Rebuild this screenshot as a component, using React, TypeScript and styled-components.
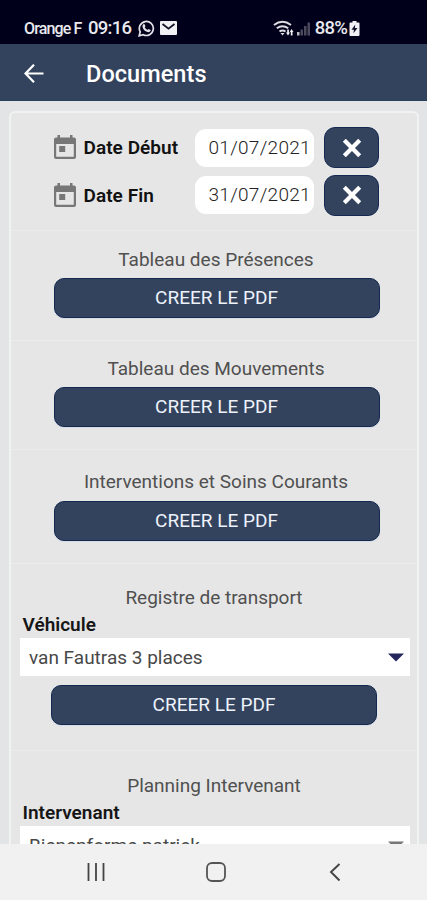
import React from "react";
import styled, { createGlobalStyle } from "styled-components";

const GlobalStyle = createGlobalStyle`
  * { box-sizing: border-box; }
  body { margin: 0; background: #e4e4e5; font-family: Roboto, "Liberation Sans", sans-serif; }
`;

const Screen = styled.div`
  display: flex;
  flex-direction: column;
  width: 427px;
  height: 900px;
  overflow: hidden;
  background: #e3e4e5;
`;

const StatusBar = styled.div`
  display: flex;
  flex: none;
  justify-content: space-between;
  height: 44px;
  padding: 12px 67px 0 24px;
  background: #00001b;
  color: #e9e9ee;
`;

const StatusGroup = styled.div`
  display: flex;
  align-items: center;
  height: 32px;
`;

const StatusText = styled.span<{ $size: number; $gap: number; $tracking: number }>`
  font-size: ${(p) => p.$size}px;
  font-weight: 500;
  letter-spacing: ${(p) => p.$tracking}px;
  margin-right: ${(p) => p.$gap}px;
  white-space: nowrap;
`;

const AppBar = styled.header`
  display: flex;
  flex: none;
  align-items: center;
  height: 57px;
  padding: 3px 0 0 24px;
  background: #33435d;
  border-bottom: 1px solid #24425c;
  color: #fff;
`;

const AppTitle = styled.h1`
  margin: 0 0 0 42px;
  font-size: 23.5px;
  line-height: 28px;
  font-weight: 500;
  letter-spacing: 0.05px;
`;

const Content = styled.main`
  flex: 1;
  min-height: 0;
  padding: 10px 8px 0 9px;
  overflow: hidden;
`;

const Panel = styled.div`
  height: 760px;
  border: 2px solid #f1f2f2;
  border-radius: 6px;
  background: #e6e6e6;
`;

const Section = styled.section<{ $height: number; $top: number }>`
  display: flex;
  flex-direction: column;
  height: ${(p) => p.$height}px;
  padding: ${(p) => p.$top}px 0 0;
  border-bottom: 1px solid #ececec;
`;

const DateRow = styled.div`
  display: flex;
  align-items: center;
  height: 41px;
  margin: 0 0 6.5px 42.5px;
`;

const DateLabel = styled.label`
  width: 111px;
  margin-left: 8px;
  font-size: 19px;
  font-weight: 600;
  letter-spacing: 0.05px;
  color: #111;
`;

const DateInput = styled.div`
  width: 119px;
  height: 38px;
  padding-left: 14px;
  margin-right: 10.5px;
  border-radius: 11px;
  background: #fff;
  color: #222;
  font-size: 19px;
  font-weight: 300;
  line-height: 38px;
  letter-spacing: 0.3px;
  white-space: nowrap;
`;

const ClearButton = styled.button`
  display: flex;
  align-items: center;
  justify-content: center;
  width: 55px;
  height: 41px;
  padding: 0;
  border: 1px solid #142850;
  border-radius: 11px;
  background: #33435d;
`;

const Title = styled.h2<{ $shift: number }>`
  margin: 0;
  padding-left: ${(p) => p.$shift}px;
  font-size: 19px;
  font-weight: 400;
  line-height: 24px;
  text-align: center;
  color: #505050;
`;

const PdfButton = styled.button<{ $left: number; $gap: number }>`
  flex: none;
  width: 326px;
  height: 40px;
  margin: ${(p) => p.$gap}px 0 0 ${(p) => p.$left}px;
  padding: 0;
  border: 1px solid #142850;
  border-radius: 10px;
  background: #33435d;
  box-shadow: 0 1px 1px #d3dbe5;
  color: #edf2fb;
  font: 400 19px/38px Roboto, "Liberation Sans", sans-serif;
`;

const FieldLabel = styled.label`
  margin: 3px 0 0 11.5px;
  font-size: 19px;
  font-weight: 600;
  line-height: 24px;
  color: #161616;
`;

const Select = styled.div<{ $muted?: boolean }>`
  display: flex;
  flex: none;
  align-items: center;
  justify-content: space-between;
  width: 390px;
  height: 38px;
  margin: 1px 0 0 9px;
  padding: 0 6px 0 9px;
  background: #fff;
  font-size: 19px;
  color: #484848;
  svg { fill: ${(p) => (p.$muted ? "#777" : "#25265b")}; }
`;

const NavBar = styled.nav`
  display: flex;
  flex: none;
  align-items: center;
  height: 56px;
  padding: 0 82px 1px 86px;
  justify-content: space-between;
  background: #f1f1f1;
`;

const MailIcon = styled.svg`
  margin-left: 5px;
`;

const Calendar = () => (
  <svg width="22" height="25" viewBox="0 0 22 25">
    <path fill="#777" fillRule="evenodd" d="M3.500 0h2.500v2.500h10V0h2.500v2.500H20q2 0 2 2V22q0 2-2 2H2q-2 0-2-2V4.500q0-2 2-2h1.500zM2.200 9v12.700h17.600V9zM5.200 11h6v6h-6z" />
  </svg>
);

const DateField = ({ label, value }: { label: string; value: string }) => (
  <DateRow>
    <Calendar />
    <DateLabel>{label}</DateLabel>
    <DateInput>{value}</DateInput>
    <ClearButton aria-label="Effacer">
      <svg width="20" height="20" viewBox="0 0 20 20">
        <path d="M2.3 2.3l15.4 15.4M17.7 2.3L2.3 17.7" stroke="#fff" strokeWidth="4.2" />
      </svg>
    </ClearButton>
  </DateRow>
);

const Caret = () => (
  <svg width="16" height="9" viewBox="0 0 16 9"><path d="M0 .5h16L8 8.5z" /></svg>
);

export default function App() {
  return (
    <Screen>
      <GlobalStyle />
      <StatusBar>
        <StatusGroup>
          <StatusText $size={16} $gap={6.500} $tracking={-0.850}>Orange F</StatusText>
          <StatusText $size={18.500} $gap={6.500} $tracking={-0.750}>09:16</StatusText>
          <svg width="17" height="17" viewBox="0 0 17 17" fill="none">
            <path d="M1.2 15.8l1-4A7 7 0 1 1 5.200 14.700z" stroke="#e2e2e8" strokeWidth="1.7" />
            <path d="M5.300 4.200q.7-.5 1.300.1l.9 1.900-.8 1.100q.9 1.900 2.800 2.600l1-1 2 1q.4.300 0 1.200-1 1.500-3 1-4-1.200-5-5-.3-2 .8-2.900z" fill="#e2e2e8" />
          </svg>
          <MailIcon width="17" height="14" viewBox="0 0 17 14">
            <rect width="17" height="14" rx="1" fill="#f1f1f5" />
            <path d="M2.500 3l6 4.700 6-4.700" stroke="#14142b" strokeWidth="1.800" fill="none" />
          </MailIcon>
        </StatusGroup>
        <StatusGroup>
          <svg width="42" height="17" viewBox="0 0 42 17" fill="none">
            <path d="M1 5Q9.500-1.500 18 5M3.800 8.300q5.700-4.200 11.400 0M6.500 11.500q3-2.200 6 0" stroke="#dedee2" strokeWidth="2" />
            <path d="M7.500 13h4l-2 2.500z" fill="#dedee2" />
            <path d="M15 15.500l-2-3h1.200V9.500h1.700v3H17zM18.500 9l2 3h-1v3.500h-1.700V12h-1z" fill="#f2f2f4" />
            <path d="M24 12h2.500v3.500H24z" fill="#bdbdc4" />
            <path d="M27.500 9.500H30v6h-2.500zM31 6h2.500v9.500H31zM34.500 2.500H37v13h-2.500z" fill="#4a4a5c" />
          </svg>
          <StatusText $size={18.500} $gap={2} $tracking={-0.800}>88%</StatusText>
          <svg width="11" height="15" viewBox="0 0 10 15">
            <path d="M3 0h4v1.500h2q1 0 1 1V14q0 1-1 1H1q-1 0-1-1V2.500q0-1 1-1h2z" fill="#f1f1f5" />
            <path d="M5.800 3.500L2 8.700h2.400L4 12.200 8 7H5.400z" fill="#11112a" />
          </svg>
        </StatusGroup>
      </StatusBar>
      <AppBar>
        <svg width="20" height="20" viewBox="0 0 20 20" fill="none" stroke="#fff" strokeWidth="2.200">
          <path d="M19.500 9.500H2M10 .7L1.500 9.500l8.500 8.800" />
        </svg>
        <AppTitle>Documents</AppTitle>
      </AppBar>
      <Content>
        <Panel>
          <Section $height={118} $top={14}>
            <DateField label="Date Début" value="01/07/2021" />
            <DateField label="Date Fin" value="31/07/2021" />
          </Section>
          <Section $height={110} $top={17}>
            <Title $shift={4}>Tableau des Présences</Title>
            <PdfButton $left={42.500} $gap={6}>CREER LE PDF</PdfButton>
          </Section>
          <Section $height={109} $top={16}>
            <Title $shift={4}>Tableau des Mouvements</Title>
            <PdfButton $left={42.500} $gap={6}>CREER LE PDF</PdfButton>
          </Section>
          <Section $height={114} $top={20}>
            <Title $shift={4}>Interventions et Soins Courants</Title>
            <PdfButton $left={42.500} $gap={7}>CREER LE PDF</PdfButton>
          </Section>
          <Section $height={187} $top={22}>
            <Title $shift={0}>Registre de transport</Title>
            <FieldLabel>Véhicule</FieldLabel>
            <Select>van Fautras 3 places<Caret /></Select>
            <PdfButton $left={40} $gap={9}>CREER LE PDF</PdfButton>
          </Section>
          <Section $height={119} $top={23}>
            <Title $shift={0}>Planning Intervenant</Title>
            <FieldLabel>Intervenant</FieldLabel>
            <Select $muted>Bienenforme patrick<Caret /></Select>
          </Section>
        </Panel>
      </Content>
      <NavBar>
        <svg width="20" height="20" viewBox="0 0 20 20" stroke="#444" strokeWidth="1.800">
          <path d="M2.500 1v18M10 1v18M17.500 1v18" />
        </svg>
        <svg width="20" height="20" viewBox="0 0 20 20" fill="none" stroke="#555" strokeWidth="1.800">
          <rect x="1" y="1" width="18" height="18" rx="5" />
        </svg>
        <svg width="20" height="20" viewBox="0 0 20 20" fill="none" stroke="#444" strokeWidth="1.900">
          <path d="M14.500 2L6 10l8.500 8.500" />
        </svg>
      </NavBar>
    </Screen>
  );
}
